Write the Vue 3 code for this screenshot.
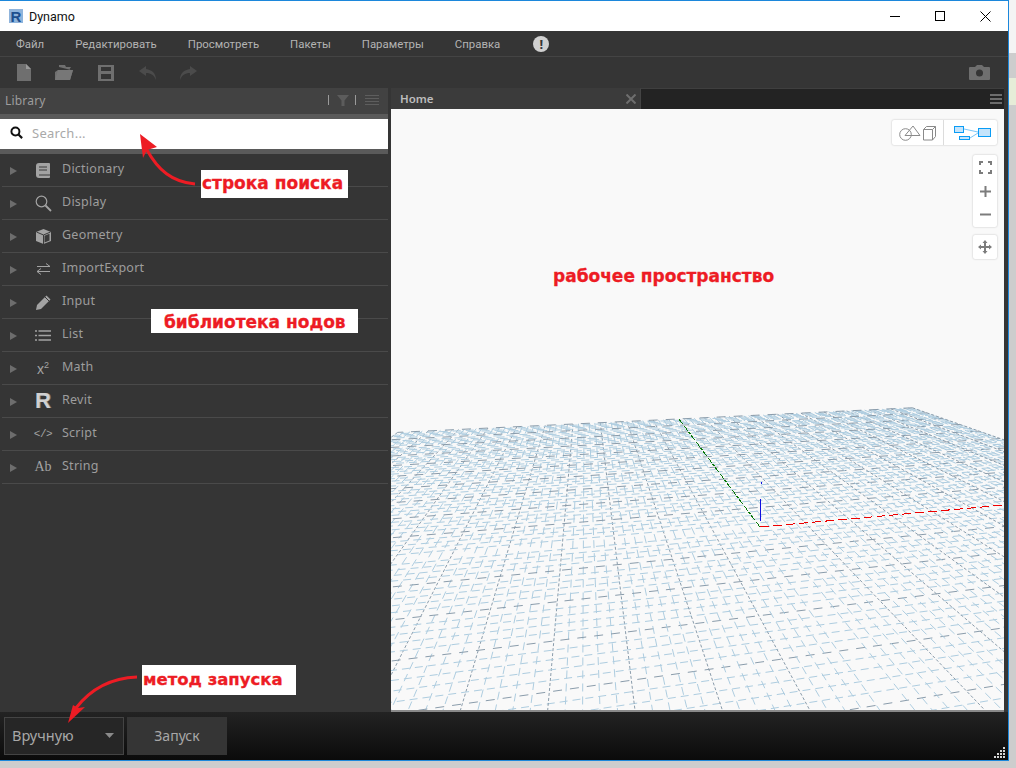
<script setup>
const menus = ['Файл', 'Редактировать', 'Просмотреть', 'Пакеты', 'Параметры', 'Справка']
const rows = ['Dictionary', 'Display', 'Geometry', 'ImportExport', 'Input', 'List', 'Math', 'Revit', 'Script', 'String']

const O = [760, 527]
const V1 = [3419, 288]
const V2 = [584.6, 293]
const N = 50
const a = 0.173 / N
const b = 0.858 / N
const project = (x, z) => {
  const s = x * a
  const t = z * b
  const w = 1 + s + t
  return [(O[0] + s * V1[0] + t * V2[0]) / w, (O[1] + s * V1[1] + t * V2[1]) / w]
}
const minW = 0.07
const gridLines = []
for (let i = -N; i <= N; i++) {
  if (i === 0) continue
  const major = i % 5 === 0
  const zMin = Math.max(-N, (minW - 1 - i * a) / b)
  if (zMin < N) {
    const p = project(i, zMin)
    const q = project(i, N)
    gridLines.push({ id: 'x' + i, x1: q[0], y1: q[1], x2: p[0], y2: p[1], major, dash: major ? '3 2' : '8 5' })
  }
  const xMin = Math.max(-N, (minW - 1 - i * b) / a)
  if (xMin < N) {
    const p = project(xMin, i)
    const q = project(N, i)
    gridLines.push({ id: 'z' + i, x1: q[0], y1: q[1], x2: p[0], y2: p[1], major, dash: major ? '9 8' : '8 5' })
  }
}
</script>

<template>
  <div class="screen">
    <div class="window">
      <header class="titlebar">
        <svg class="app-logo" width="16" height="16" viewBox="0 0 16 16">
          <rect x="1" y="1" width="14" height="14" fill="#8fb4dc" />
          <text x="2.500" y="14" class="logo-r">R</text>
        </svg>
        <span class="app-name">Dynamo</span>
        <div class="win-buttons">
          <svg width="10" height="10" viewBox="0 0 10 10"><path d="M0 5.500h10" stroke="#000" fill="none" /></svg>
          <svg width="10" height="10" viewBox="0 0 10 10"><rect x=".5" y=".5" width="9" height="9" stroke="#000" fill="none" /></svg>
          <svg width="11" height="11" viewBox="0 0 11 11"><path d="M.5.5l10 10M10.500.5l-10 10" stroke="#000" fill="none" /></svg>
        </div>
      </header>

      <nav class="menubar">
        <span v-for="m in menus" :key="m" class="menu-item">{{ m }}</span>
        <span class="notice">!</span>
      </nav>

      <div class="toolbar">
        <svg class="tool tool-new" width="14" height="17" viewBox="0 0 14 17"><path d="M0 0h9l5 5v12H0z" fill="#6f6f6f" /><path d="M9 0l5 5H9z" fill="#9a9a9a" /></svg>
        <svg class="tool tool-open" width="19" height="17" viewBox="0 0 19 17"><path d="M4 3V1h6l1 2h5l-2 3H3L0 8v8h15l3-10h-2" fill="#6f6f6f" /><path d="M3 6h15l-3 10H0z" fill="#777" /></svg>
        <svg class="tool tool-save" width="16" height="16" viewBox="0 0 16 16"><path d="M0 0h16v16H0z" fill="#6f6f6f" /><rect x="3" y="2" width="10" height="4" fill="#353535" /><rect x="3" y="9" width="10" height="5" fill="#353535" /></svg>
        <svg class="tool tool-undo" width="18" height="14" viewBox="0 0 18 14"><path d="M7 0L0 5l7 5V7c5 0 8 2 10 7 0-7-4-10-10-11z" fill="#4b4b4b" /></svg>
        <svg class="tool tool-redo" width="18" height="14" viewBox="0 0 18 14"><path d="M11 0l7 5-7 5V7C6 7 3 9 1 14 1 7 5 4 11 3z" fill="#4b4b4b" /></svg>
        <svg class="tool-camera" width="21" height="15" viewBox="0 0 21 15"><path d="M1 2h5l2-2h5l2 2h5a1 1 0 011 1v11a1 1 0 01-1 1H1a1 1 0 01-1-1V3a1 1 0 011-1z" fill="#6f6f6f" /><circle cx="10.500" cy="8" r="3.500" fill="#353535" /></svg>
      </div>

      <div class="workspace">
        <aside class="library">
          <div class="lib-header">
            <span class="lib-title">Library</span>
            <span class="lib-tools">
              <i class="tick"></i>
              <svg class="funnel" width="12" height="11" viewBox="0 0 12 11"><path d="M0 0h12L7.500 5.500V11h-3V5.500z" fill="#5c5c5c" /></svg>
              <i class="tick"></i>
              <svg class="stack" width="14" height="10" viewBox="0 0 14 10"><path d="M0 .5h14M0 3.500h14M0 6.500h14M0 9.500h14" stroke="#5e5e5e" /></svg>
            </span>
          </div>
          <div class="search">
            <svg width="13" height="13" viewBox="0 0 12 12"><circle cx="5" cy="5" r="3.700" stroke="#111" stroke-width="1.800" fill="none" /><path d="M7.800 7.800l3.400 3.400" stroke="#111" stroke-width="2" /></svg>
            <span class="placeholder">Search...</span>
          </div>
          <ul class="lib-list">
            <li v-for="r in rows" :key="r" class="lib-row">
              <svg class="caret" width="7" height="8" viewBox="0 0 7 8"><path d="M0 0l7 4-7 4z" fill="#6d6d6d" /></svg>
              <span class="lib-icon">
                <svg v-if="r === 'Dictionary'" width="14" height="15" viewBox="0 0 14 15"><path d="M3 0h10a1 1 0 011 1v13a1 1 0 01-1 1H3a3 3 0 01-3-3V3a3 3 0 013-3z" fill="#a3a3a3" /><path d="M3 4h8M3 7h8M3 12h11" stroke="#3a3a3a" /></svg>
                <svg v-else-if="r === 'Display'" width="17" height="17" viewBox="0 0 17 17"><circle cx="6.500" cy="6.500" r="5.300" stroke="#a3a3a3" stroke-width="1.200" fill="none" /><path d="M10.500 10.500l5.500 5.500" stroke="#a3a3a3" stroke-width="1.800" /></svg>
                <svg v-else-if="r === 'Geometry'" width="15" height="15" viewBox="0 0 15 15"><path d="M7.500 0L15 3v9l-7.500 3L0 12V3z" fill="#a3a3a3" /><path d="M.5 3l7 3 7-3M7.500 6v9" stroke="#3a3a3a" fill="none" /><path d="M8.500 6.800l5-2v6.600l-5 2z" fill="#3a3a3a" /></svg>
                <svg v-else-if="r === 'ImportExport'" width="15" height="12" viewBox="0 0 15 12"><path d="M1 3.500h13M10 .5l4 3M14 8.500H1M5 5.500l-4 3 4 3" stroke="#a3a3a3" fill="none" /></svg>
                <svg v-else-if="r === 'Input'" width="15" height="15" viewBox="0 0 15 15"><path d="M0 15l1-5L10.500.5 14.500 4.500 5 14z" fill="#a3a3a3" /><path d="M9 2l4 4" stroke="#353535" /></svg>
                <svg v-else-if="r === 'List'" width="16" height="11" viewBox="0 0 16 11"><path d="M3.500 1h12.500M3.500 5.500h12.500M3.500 10h12.500" stroke="#a3a3a3" stroke-width="1.300" /><path d="M0 1h2M0 5.500h2M0 10h2" stroke="#a3a3a3" stroke-width="1.600" /></svg>
                <span v-else-if="r === 'Math'" class="math-icon">x<sup>2</sup></span>
                <span v-else-if="r === 'Revit'" class="revit-icon">R</span>
                <span v-else-if="r === 'Script'" class="script-icon">&lt;/&gt;</span>
                <span v-else class="string-icon">Ab</span>
              </span>
              <span class="lib-name">{{ r }}</span>
            </li>
          </ul>
        </aside>

        <main class="stage">
          <div class="tabbar">
            <div class="tab">
              <span class="tab-name">Home</span>
              <svg width="10" height="10" viewBox="0 0 10 10"><path d="M.5.5l9 9M9.500.5l-9 9" stroke="#6e6e6e" stroke-width="2" /></svg>
            </div>
            <div class="tab-rest">
              <svg width="12" height="10" viewBox="0 0 12 10"><path d="M0 1h12M0 5h12M0 9h12" stroke="#6c6c6c" stroke-width="2" /></svg>
            </div>
          </div>
          <div class="canvas">
            <svg class="grid" width="613" height="601" viewBox="391 109 613 601">
              <line v-for="l in gridLines" :key="l.id" :x1="l.x1" :y1="l.y1" :x2="l.x2" :y2="l.y2"
                :stroke="l.major ? '#8a9cab' : '#aecde0'" :stroke-dasharray="l.dash" />
              <line x1="760" y1="527" x2="679" y2="419" stroke="#0a7a0a" stroke-dasharray="3 1" shape-rendering="crispEdges" />
              <line x1="760" y1="527" x2="1004" y2="505" stroke="#ee0000" stroke-dasharray="9 4" shape-rendering="crispEdges" />
              <line x1="760.500" y1="499" x2="760.500" y2="521" stroke="#1010e0" />
              <line x1="761.500" y1="482" x2="761.500" y2="484" stroke="#1010e0" />
            </svg>
            <div class="view-switch">
              <div class="switch-cell switch-3d">
                <svg width="37" height="16" viewBox="0 0 37 16"><g fill="none" stroke="#8a8a8a"><circle cx="6.500" cy="9.500" r="5.800" /><path d="M6 10.500L14 1l7 9.500z" /><path d="M24.500 4.500h9v10.500h-9zM24.500 4.500l3-3h9v10l-3 3.500M33.500 4.500l3-3" /></g></svg>
              </div>
              <div class="switch-cell switch-graph">
                <svg width="37" height="14" viewBox="0 0 37 14"><g stroke="#0a9cf5" fill="#c5e4fb"><rect x=".5" y=".5" width="9" height="6" /><rect x="24.500" y="2.500" width="12" height="8" /><rect x="5.500" y="10.500" width="10" height="3" /></g><path d="M10 3l14 3M16 12l8-5" stroke="#7cc6f8" fill="none" /></svg>
              </div>
            </div>
            <div class="zoom-box">
              <svg width="13" height="13" viewBox="0 0 13 13"><path d="M1 4V1h3M9 1h3v3M12 9v3H9M4 12H1V9" stroke="#7c7c7c" stroke-width="2" fill="none" /></svg>
              <svg width="11" height="11" viewBox="0 0 11 11"><path d="M5.500 0v11M0 5.500h11" stroke="#7c7c7c" stroke-width="2" /></svg>
              <svg width="11" height="11" viewBox="0 0 11 11"><path d="M0 5.500h11" stroke="#7c7c7c" stroke-width="2" /></svg>
            </div>
            <div class="pan-box">
              <svg width="14" height="14" viewBox="0 0 14 14"><path d="M7 0l2.500 3h-5zM7 14l2.500-3h-5zM0 7l3-2.500v5zM14 7l-3-2.500v5z" fill="#7c7c7c" /><path d="M7 2v10M2 7h10" stroke="#7c7c7c" stroke-width="2" /></svg>
            </div>
          </div>
        </main>
      </div>

      <footer class="runbar">
        <div class="run-mode">
          <span>Вручную</span>
          <svg width="9" height="5" viewBox="0 0 9 5"><path d="M0 0h9L4.500 5z" fill="#8a8a8a" /></svg>
        </div>
        <div class="run-button">Запуск</div>
        <svg class="grip" width="11" height="11" viewBox="0 0 11 11"><path d="M9 0h2v2H9zM6 3h2v2H6zM9 3h2v2H9zM3 6h2v2H3zM6 6h2v2H6zM9 6h2v2H9zM0 9h2v2H0zM3 9h2v2H3zM6 9h2v2H6zM9 9h2v2H9z" fill="#d6d6d6" /></svg>
      </footer>
    </div>

    <div class="desktop-edge">
      <span class="edge-white"></span>
      <span class="edge-grey"></span>
      <span class="edge-green"></span>
      <span class="edge-grey edge-grow"></span>
    </div>

    <svg class="arrows" width="1016" height="768" viewBox="0 0 1016 768">
      <path d="M195 184C172 182 158 170 147 150" stroke="#ed1c24" stroke-width="3" fill="none" />
      <path d="M140 134l3 24 4-8 10-3z" fill="#ed1c24" />
      <path d="M137 677C110 678 90 690 76 708" stroke="#ed1c24" stroke-width="3" fill="none" />
      <path d="M68 723l5-18 5 3 7-1z" fill="#ed1c24" />
    </svg>
    <div class="note note-search">строка поиска</div>
    <div class="note note-library">библиотека нодов</div>
    <div class="note note-run">метод запуска</div>
    <div class="note note-space">рабочее пространство</div>
  </div>
</template>

<style scoped>
.screen {
  position: relative;
  display: flex;
  width: 1016px;
  height: 768px;
  overflow: hidden;
  background: #cdcdcd;
  font-family: "Noto Sans", "Liberation Sans", sans-serif;
}
.window {
  display: flex;
  flex-direction: column;
  width: 1008px;
  flex: none;
  box-sizing: content-box;
  background: #353535;
  border-top: 1px solid #1c87db;
  border-right: 1px solid #1c87db;
  border-bottom: 1px solid #1c87db;
  margin-bottom: 6px;
  height: 759px;
}
.titlebar {
  display: flex;
  align-items: center;
  height: 30px;
  flex: none;
  background: #fff;
  padding-left: 8px;
}
.logo-r {
  font: bold 15px "Liberation Sans", sans-serif;
  fill: #1d4f8f;
}
.app-name {
  margin-left: 5px;
  font: 12.500px Roboto, sans-serif;
  color: #111;
}
.win-buttons {
  display: flex;
  align-items: center;
  gap: 35px;
  margin-left: auto;
  margin-right: 17px;
}
.menubar {
  display: flex;
  align-items: center;
  gap: 31px;
  height: 25px;
  flex: none;
  padding-left: 16px;
  border-bottom: 1px solid #444;
  box-sizing: content-box;
  color: #b3b3b3;
  font-family: Roboto, sans-serif;
  font-size: 11.400px;
}
.menu-item {
  white-space: nowrap;
}
.notice {
  display: flex;
  align-items: center;
  justify-content: center;
  width: 16px;
  height: 16px;
  margin-left: 2px;
  border-radius: 50%;
  background: #d0d0d0;
  color: #353535;
  font-family: "Noto Sans", sans-serif;
  font-weight: 700;
  font-size: 13px;
}
.toolbar {
  display: flex;
  align-items: center;
  height: 31px;
  flex: none;
  padding-left: 17px;
  padding-right: 18px;
}
.tool-open { margin-left: 24px; }
.tool-save { margin-left: 24px; }
.tool-undo { margin-left: 25px; }
.tool-redo { margin-left: 22px; }
.tool-camera { margin-left: auto; }
.workspace {
  display: flex;
  flex: 1;
  min-height: 0;
}
.library {
  width: 388px;
  flex: none;
  margin-right: 3px;
}
.lib-header {
  display: flex;
  align-items: center;
  justify-content: space-between;
  height: 24px;
  padding: 0 9px 2px 5px;
  background: #424242;
  border-bottom: 5px solid #5a5a5a;
  box-sizing: content-box;
}
.lib-title {
  font-size: 12px;
  color: #9d9d9d;
  letter-spacing: .2px;
}
.lib-tools {
  display: flex;
  align-items: center;
}
.funnel { margin: 0 6px 0 8px; }
.stack { margin-left: 9px; }
.tick {
  width: 1px;
  height: 10px;
  background: #9a9a9a;
}
.search {
  display: flex;
  align-items: center;
  gap: 9px;
  height: 27px;
  padding: 0 0 3px 10px;
  background: #fff;
  border-bottom: 5px solid #5a5a5a;
  box-sizing: content-box;
}
.placeholder {
  font-size: 13px;
  color: #a9a9a9;
  letter-spacing: .25px;
}
.lib-list {
  list-style: none;
  margin: 0;
  padding: 0 0 0 2px;
}
.lib-row {
  display: flex;
  align-items: center;
  height: 32px;
  padding-left: 8px;
  border-bottom: 1px solid #4a4a4a;
  box-sizing: content-box;
}
.caret {
  flex: none;
  margin-top: 1px;
}
.lib-icon {
  display: flex;
  align-items: center;
  justify-content: center;
  width: 20px;
  height: 20px;
  margin-left: 16px;
  color: #a3a3a3;
}
.lib-name {
  margin-left: 9px;
  margin-top: -3px;
  font-size: 12.500px;
  color: #9d9d9d;
  letter-spacing: .25px;
}
.math-icon {
  font: 14px "Liberation Sans", sans-serif;
}
.math-icon sup {
  font-size: 9px;
}
.revit-icon {
  font: bold 22px "Liberation Sans", sans-serif;
  color: #d0d0d0;
  text-shadow: 1px 0 #777;
}
.script-icon {
  font: 11px "Liberation Mono", monospace;
  letter-spacing: -.5px;
}
.string-icon {
  font: 14px "Liberation Serif", serif;
}
.stage {
  display: flex;
  flex-direction: column;
  flex: 1;
  min-width: 0;
}
.tabbar {
  display: flex;
  height: 21px;
  flex: none;
  margin-right: 4px;
}
.tab {
  display: flex;
  align-items: center;
  justify-content: space-between;
  width: 249px;
  padding: 0 4px 0 9px;
  box-sizing: border-box;
  background: #3b3b3b;
}
.tab-name {
  font-size: 11.500px;
  font-weight: 600;
  color: #bdbdbd;
}
.tab-rest {
  display: flex;
  align-items: center;
  justify-content: flex-end;
  flex: 1;
  padding-right: 2px;
  background: #232323;
  border-top: 1px solid #3f3f3f;
  border-left: 1px solid #444;
}
.canvas {
  position: relative;
  flex: 1;
  min-height: 0;
  margin-right: 4px;
  background: #f9f9f9;
  border-bottom: 2px solid #8a8a8a;
  overflow: hidden;
}
.grid {
  position: absolute;
  left: 0;
  top: 0;
}
.view-switch {
  position: absolute;
  top: 11px;
  right: 7px;
  display: flex;
  height: 25px;
  background: #fff;
  border-radius: 2px;
  box-shadow: 0 0 2px #bbb;
}
.switch-cell {
  display: flex;
  align-items: center;
  justify-content: center;
  width: 53px;
}
.switch-graph {
  padding-left: 3px;
  box-sizing: border-box;
}
.switch-3d {
  width: 52px;
  box-sizing: border-box;
  border-right: 1px solid #dcdcdc;
}
.zoom-box {
  position: absolute;
  top: 46px;
  right: 7px;
  display: flex;
  flex-direction: column;
  align-items: center;
  justify-content: space-between;
  width: 24px;
  height: 72px;
  padding: 6px 0 7px;
  box-sizing: border-box;
  background: #fff;
  border-radius: 2px;
  box-shadow: 0 0 2px #bbb;
}
.pan-box {
  position: absolute;
  top: 126px;
  right: 7px;
  display: flex;
  align-items: center;
  justify-content: center;
  width: 24px;
  height: 24px;
  background: #fff;
  border-radius: 2px;
  box-shadow: 0 0 2px #bbb;
}
.runbar {
  position: relative;
  display: flex;
  align-items: center;
  gap: 3px;
  height: 48px;
  flex: none;
  padding-left: 4px;
  background: linear-gradient(#232323, #0b0b0b);
}
.run-mode {
  display: flex;
  align-items: center;
  justify-content: space-between;
  width: 120px;
  height: 38px;
  padding: 0 9px 2px 7px;
  box-sizing: border-box;
  background: #262626;
  border: 1px solid #444;
  color: #a8a8a8;
  font-size: 14.500px;
}
.run-button {
  display: flex;
  align-items: center;
  justify-content: center;
  box-sizing: border-box;
  width: 100px;
  height: 38px;
  padding-bottom: 2px;
  background: #353535;
  color: #a8a8a8;
  font-size: 14px;
}
.grip {
  position: absolute;
  right: 3px;
  bottom: 2px;
}
.desktop-edge {
  display: flex;
  flex-direction: column;
  width: 7px;
  height: 768px;
  flex: none;
}
.edge-white { height: 53px; background: #f4f4f4; }
.edge-grey { height: 25px; background: #cdcdcd; }
.edge-green { height: 27px; background: #e6edd8; }
.edge-grow { flex: 1; }
.arrows {
  position: absolute;
  left: 0;
  top: 0;
  pointer-events: none;
}
.note {
  position: absolute;
  box-sizing: border-box;
  background: #fff;
  color: #ed1c24;
  font-family: "DejaVu Sans", sans-serif;
  font-weight: 700;
  white-space: nowrap;
  -webkit-text-stroke: .3px #ed1c24;
}
.note-search {
  left: 201px;
  top: 170px;
  width: 147px;
  height: 28px;
  padding-left: 1px;
  font-size: 17px;
  line-height: 27px;
}
.note-library {
  left: 151px;
  top: 309px;
  width: 207px;
  height: 24px;
  padding-left: 13px;
  font-size: 17px;
  line-height: 27px;
}
.note-run {
  left: 142px;
  top: 665px;
  width: 154px;
  height: 30px;
  padding-left: 1px;
  font-size: 16.500px;
  line-height: 30px;
}
.note-space {
  left: 553px;
  top: 264px;
  background: transparent;
  font-size: 17px;
  line-height: 25px;
}
</style>
